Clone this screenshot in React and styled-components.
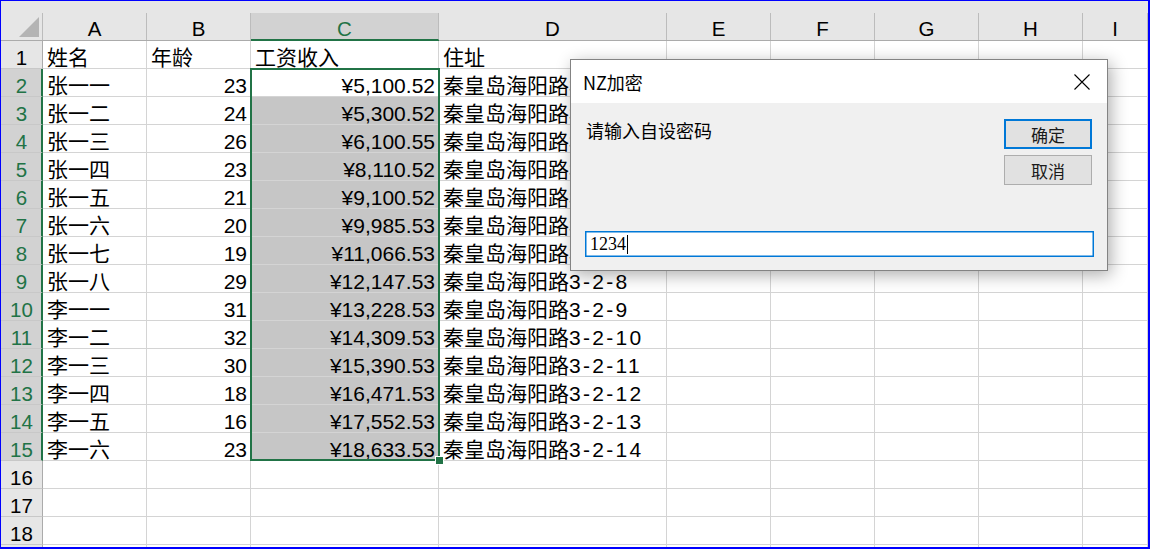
import React from "react";
import styled, { createGlobalStyle } from "styled-components";

const GlobalStyle = createGlobalStyle`
  body {
    margin: 0;
    background: #fff;
  }
`;

const GREEN = "#217346";
const GRID = "#d4d4d4";

const Page = styled.div`
  position: relative;
  width: 1150px;
  height: 549px;
  box-sizing: border-box;
  border-style: solid;
  border-color: #0000ff;
  border-width: 1px 2px 2px 1px;
  overflow: hidden;
  font-family: "Liberation Sans", "Noto Sans CJK SC", sans-serif;
  color: #000;
`;

const Sheet = styled.div`
  display: grid;
  grid-template-columns: 42px 104px 104px 188px 228px 104px 104px 104px 104px 1fr;
  grid-template-rows: 40px repeat(19, 28px);
  height: 546px;
  overflow: hidden;
`;

const HeaderCell = styled.div`
  grid-row: 1;
  grid-column: ${p => p.$col};
  background: #e6e6e6;
  box-sizing: border-box;
  padding-top: 12px;
  border-bottom: 1px solid ${p => (p.$selected ? GREEN : "#ababab")};
  display: flex;
  flex-direction: column;
`;

const HeaderLabel = styled.div`
  flex: 1;
  box-sizing: border-box;
  border-right: 1px solid #bcbcbc;
  border-bottom: ${p => (p.$selected ? `1px solid ${GREEN}` : "none")};
  background: ${p => (p.$selected ? "#d2d2d2" : "transparent")};
  color: ${p => (p.$selected ? GREEN : "#000")};
  display: flex;
  align-items: flex-end;
  justify-content: center;
  font-size: 20.5px;
  line-height: 20px;
  padding-bottom: ${p => (p.$selected ? "0" : "1px")};
`;

const Corner = styled.div`
  flex: 1;
  box-sizing: border-box;
  border-right: 1px solid #bcbcbc;
  display: flex;
  align-items: flex-end;
  justify-content: flex-end;
  padding: 0 3px 3px 0;
`;

const RowHeader = styled.div`
  grid-row: ${p => p.$row};
  grid-column: 1;
  box-sizing: border-box;
  background: ${p => (p.$selected ? "#d2d2d2" : "#e6e6e6")};
  color: ${p => (p.$selected ? GREEN : "#000")};
  border-right: ${p => (p.$selected ? `2px solid ${GREEN}` : "1px solid #ababab")};
  border-bottom: 1px solid #c8c8c8;
  display: flex;
  align-items: flex-end;
  justify-content: center;
  font-size: 20.5px;
  line-height: 20px;
  padding-left: ${p => (p.$selected ? "1px" : "0")};
`;

const Cell = styled.div`
  grid-row: ${p => p.$row};
  grid-column: ${p => p.$col};
  box-sizing: border-box;
  border-right: 1px solid ${GRID};
  border-bottom: 1px solid ${GRID};
  background: ${p => (p.$shade ? "#c6c6c6" : "#fff")};
  display: flex;
  align-items: flex-end;
  justify-content: ${p => (p.$num ? "flex-end" : "flex-start")};
  padding: ${p => (p.$num ? "0 3px 0 0" : "0 0 0 4px")};
  font-size: 21px;
  line-height: 20px;
  white-space: nowrap;
`;

const AddrNo = styled.span`
  letter-spacing: 2.3px;
`;

const SelectionFrame = styled.div`
  grid-row: 3 / 17;
  grid-column: 4;
  margin: -1px -1px 0 -1px;
  border: 2px solid ${GREEN};
  position: relative;
  z-index: 1;
  pointer-events: none;
`;

const FillHandle = styled.div`
  position: absolute;
  right: -6px;
  bottom: -6px;
  width: 7px;
  height: 7px;
  background: ${GREEN};
  border: 1px solid #fff;
`;

/* dialog */

const Dialog = styled.div`
  position: absolute;
  left: 569px;
  top: 58px;
  width: 538px;
  height: 212px;
  box-sizing: border-box;
  border: 1px solid #838383;
  box-shadow: 3px 4px 16px rgba(0, 0, 0, 0.32);
  display: flex;
  flex-direction: column;
  z-index: 5;
  font-family: "Noto Sans CJK SC", "Liberation Sans", sans-serif;
`;

const TitleBar = styled.div`
  height: 43px;
  background: #fff;
  display: flex;
  align-items: center;
  justify-content: space-between;
  padding: 0 17px 0 12px;
  font-size: 18px;
`;

const Body = styled.div`
  flex: 1;
  background: #f0f0f0;
  display: grid;
  grid-template-columns: 1fr auto;
  grid-template-rows: 1fr auto;
  padding: 16px 15px 13px 14px;
`;

const Prompt = styled.div`
  font-size: 18px;
  line-height: 24px;
  padding-left: 1px;
  margin-top: -1px;
`;

const Buttons = styled.div`
  display: flex;
  flex-direction: column;
  gap: 6px;
`;

const Button = styled.div`
  width: 88px;
  height: 30px;
  box-sizing: border-box;
  background: #e1e1e1;
  border: ${p => (p.$primary ? "2px solid #0078d7" : "1px solid #adadad")};
  display: flex;
  align-items: center;
  justify-content: center;
  font-size: 17px;
  color: #1a1a1a;
`;

const TextBox = styled.div`
  grid-column: 1 / 3;
  height: 26px;
  box-sizing: border-box;
  margin-right: -2px;
  background: #fff;
  border: 1px solid #0078d7;
  box-shadow: inset 0 0 0 0.5px #0078d7;
  display: flex;
  align-items: center;
  padding-left: 4px;
  font-family: "Liberation Serif", serif;
  font-size: 18px;
`;

const Caret = styled.span`
  display: inline-block;
  width: 1px;
  height: 19px;
  background: #000;
  margin-left: 1px;
`;

const names = ["张一一", "张一二", "张一三", "张一四", "张一五", "张一六", "张一七", "张一八", "李一一", "李一二", "李一三", "李一四", "李一五", "李一六"];
const ages = [23, 24, 26, 23, 21, 20, 19, 29, 31, 32, 30, 18, 16, 23];
const pay = ["¥5,100.52", "¥5,300.52", "¥6,100.55", "¥8,110.52", "¥9,100.52", "¥9,985.53", "¥11,066.53", "¥12,147.53", "¥13,228.53", "¥14,309.53", "¥15,390.53", "¥16,471.53", "¥17,552.53", "¥18,633.53"];
const letters = ["A", "B", "C", "D", "E", "F", "G", "H", "I"];

function CloseIcon() {
  return (
    <svg width="16" height="16" viewBox="0 0 16 16">
      <path d="M0.5 0.5 L15.5 15.5 M15.5 0.5 L0.5 15.5" stroke="#000" strokeWidth="1.1" fill="none" />
    </svg>
  );
}

function CornerTriangle() {
  return (
    <svg width="20" height="20" viewBox="0 0 20 20">
      <polygon points="20,0 20,20 0,20" fill="#b4b4b4" />
    </svg>
  );
}

function renderRow(r) {
  const gridRow = r + 1;
  const sel = r >= 2 && r <= 15;
  const cells = [];
  let vals = ["", "", "", ""];
  if (r === 1) vals = ["姓名", "年龄", "工资收入", "住址"];
  if (sel) {
    const i = r - 2;
    vals = [names[i], ages[i], pay[i], (
      <>秦皇岛海阳路<AddrNo>3-2-{r - 1}</AddrNo></>
    )];
  }
  for (let c = 0; c < 9; c++) {
    const num = sel && (c === 1 || c === 2);
    cells.push(
      <Cell key={c} $row={gridRow} $col={c + 2} $num={num} $shade={c === 2 && r >= 3 && r <= 15}>
        {c < 4 ? vals[c] : ""}
      </Cell>
    );
  }
  return (
    <React.Fragment key={r}>
      {/* the last row only peeks out by two pixels, so it carries no number */}
      <RowHeader $row={gridRow} $selected={sel}>{r < 19 ? r : ""}</RowHeader>
      {cells}
    </React.Fragment>
  );
}

export default function App() {
  const rows = [];
  for (let r = 1; r <= 19; r++) rows.push(renderRow(r));
  return (
    <>
      <GlobalStyle />
      <Page>
        <Sheet>
          <HeaderCell $col={1}>
            <Corner><CornerTriangle /></Corner>
          </HeaderCell>
          {letters.map((l, i) => (
            <HeaderCell key={l} $col={i + 2} $selected={l === "C"}>
              <HeaderLabel $selected={l === "C"}>{l}</HeaderLabel>
            </HeaderCell>
          ))}
          {rows}
          <SelectionFrame>
            <FillHandle />
          </SelectionFrame>
        </Sheet>
        <Dialog>
          <TitleBar>
            <span>NZ加密</span>
            <CloseIcon />
          </TitleBar>
          <Body>
            <Prompt>请输入自设密码</Prompt>
            <Buttons>
              <Button $primary>确定</Button>
              <Button>取消</Button>
            </Buttons>
            <TextBox>1234<Caret /></TextBox>
          </Body>
        </Dialog>
      </Page>
    </>
  );
}
